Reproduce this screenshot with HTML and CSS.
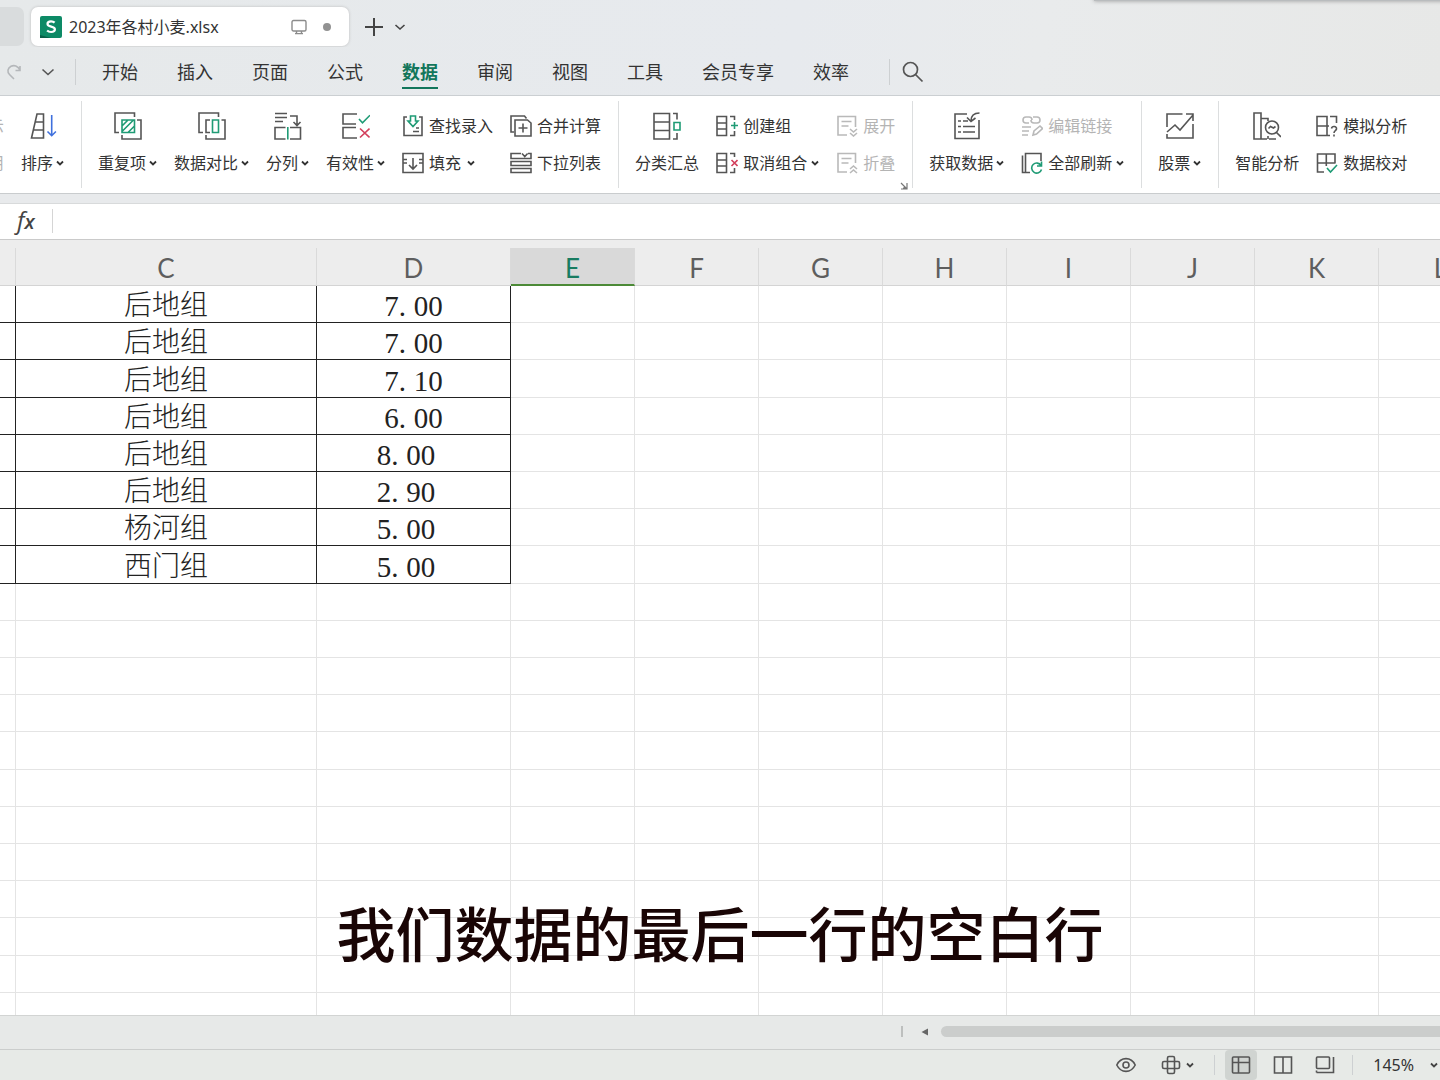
FILE: index.html
```html
<!DOCTYPE html>
<html lang="zh-CN">
<head>
<meta charset="utf-8">
<meta name="viewport" content="width=device-width, initial-scale=1">
<title>2023年各村小麦.xlsx</title>
<link rel="stylesheet" href="styles.css">
</head>
<body>
<svg class="defs" aria-hidden="true">
  <symbol id="caret" viewBox="0 0 8 8"><path d="M1 2.500 4 5.500 7 2.500" fill="none" stroke="currentColor" stroke-width="1.800"/></symbol>
</svg>
<div class="app">
  <header class="top">
    <div class="window-edge"></div>
    <div class="tabs">
      <div class="tab-rest"></div>
      <div class="tab">
        <svg class="logo" viewBox="0 0 22 22"><rect width="22" height="22" rx="2" fill="#0d8a66"/><path d="M0 22v-3l11 3z" fill="#076048"/><path d="M14.600 6.600C13.600 5.600 12.400 5.300 11 5.300c-2.200 0-3.500 1-3.500 2.600 0 3.600 7.400 1.800 7.400 5.400 0 1.700-1.500 2.700-3.800 2.700-1.600 0-3-.5-4-1.500" fill="none" stroke="#fff" stroke-width="2.200"/></svg>
        <span class="tab-name">2023年各村小麦.xlsx</span>
        <svg class="i16" viewBox="0 0 16 16" fill="none" stroke="#8c8c8c" stroke-width="1.400"><rect x="1" y="1.500" width="14" height="10.500" rx="1.500"/><path d="M5.500 12v2.500M10.500 12v2.500M4 14.600h8"/></svg>
        <span class="dot"></span>
      </div>
      <button class="plain new" aria-label="新建"><svg class="i20" viewBox="0 0 20 20" fill="none" stroke="#444" stroke-width="2"><path d="M10 1v18M1 10h18"/></svg></button>
      <button class="plain" aria-label="标签列表"><svg class="i12" viewBox="0 0 12 12" fill="none" stroke="#444" stroke-width="1.600"><path d="m1.500 4 4.500 4 4.500-4"/></svg></button>
    </div>
    <nav class="menu">
      <button class="plain redo" aria-label="恢复"><svg class="i16" viewBox="0 0 16 16" fill="none" stroke="#b4b7ba" stroke-width="1.600"><path d="M14 2v4.500H9.500M14 6.200C12 1.500 8 .8 5 2.300 1.500 4.200 1 8 3.500 10.500L8 15"/></svg></button>
      <button class="plain more" aria-label="更多"><svg class="i14" viewBox="0 0 14 14" fill="none" stroke="#555" stroke-width="1.600"><path d="m1.500 4.500 5.500 5 5.500-5"/></svg></button>
      <span class="bar"></span>
      <div class="links">
        <a href="#">开始</a><a href="#">插入</a><a href="#">页面</a><a href="#">公式</a><a href="#" class="on">数据</a><a href="#">审阅</a><a href="#">视图</a><a href="#">工具</a><a href="#">会员专享</a><a href="#">效率</a>
      </div>
      <span class="bar"></span>
      <button class="plain find" aria-label="搜索"><svg class="i22" viewBox="0 0 22 22" fill="none" stroke="#555" stroke-width="1.700"><circle cx="8.500" cy="8.500" r="7"/><path d="m13.500 13.500 7 7"/></svg></button>
    </nav>
  </header>

  <section class="ribbon" aria-label="数据">
    <div class="group first">
      <div class="pair clip"><span class="small off">全部显示</span><span class="small off">重新应用</span></div>
      <button class="big"><span class="pic"><svg class="i28" viewBox="0 0 28 28"><path d="M8 2h6.500v24H2.500zM6.500 10h8M4.500 18h10"/><path class="b" d="M22.700 3v20.500M18.500 19.500l4.200 4.200 4.200-4.200"/></svg></span><span class="lbl">排序<svg class="car"><use href="#caret"/></svg></span></button>
    </div>
    <div class="group">
      <button class="big"><span class="pic"><svg class="i28" viewBox="0 0 28 28"><path d="M5 20.500H1V1h19.500v4M23 8h4v19H8v-4"/><path class="g" d="M8 8h12.500v12.500H8zM8 14l6-6M8 19.500 19.500 8M14 20.500l6.500-6.500"/></svg></span><span class="lbl">重复项<svg class="car"><use href="#caret"/></svg></span></button>
      <button class="big"><span class="pic"><svg class="i28" viewBox="0 0 28 28"><path d="M5 20.500H1V1h19.500v4M23.500 8H27v19H8v-4M12 8H8v12.500h4"/><path class="g" d="M14.500 8h6v12.500h-6z"/></svg></span><span class="lbl">数据对比<svg class="car"><use href="#caret"/></svg></span></button>
      <button class="big"><span class="pic"><svg class="i28" viewBox="0 0 28 28"><path d="M1 1.500h12M1 5.500h12M1 9.500h8M16 4h7v9M19.500 10l3.500 3.500 3.500-3.500M11.500 15.500H1V27h10.500M16 15.500h10.500V27H16"/><path class="g" d="M13.800 15v12.500"/></svg></span><span class="lbl">分列<svg class="car"><use href="#caret"/></svg></span></button>
      <button class="big"><span class="pic"><svg class="i28" viewBox="0 0 28 28"><path d="M15 2H1v10h13M14 15.500H1V26h14"/><path class="g" d="m17 7 3.500 3.800L28 3.200"/><path class="r" d="m18 16.500 9.500 9M27.500 16.500l-9.500 9"/></svg></span><span class="lbl">有效性<svg class="car"><use href="#caret"/></svg></span></button>
      <div class="pair">
        <button class="small"><svg class="i22" viewBox="0 0 22 22"><path d="M5 2H2v18.500h18V2h-3M11 16.500h6M14 13h3"/><path class="g" d="M8.500 1h5v5H16l-5 5.500L6 6h2.500z"/></svg>查找录入</button>
        <button class="small"><svg class="i22" viewBox="0 0 22 22"><path d="M5 7.500H1v-6h20v6h-4M5 11H1v9.500h20V11h-4M1 7.500V11M21 7.500V11M11 6v11M7 13l4 4 4-4"/></svg>填充<svg class="car far"><use href="#caret"/></svg></button>
      </div>
      <div class="pair">
        <button class="small"><svg class="i22" viewBox="0 0 22 22"><path d="M4 17H1V1h13.500l2 2.500M5 5h12.500L21 8v13H5zM13 8.500v9M8.500 13h9"/></svg>合并计算</button>
        <button class="small"><svg class="i22" viewBox="0 0 22 22"><path d="M11 1.500H1v5h20v-5h-3M12 1.500l2.800 3 2.800-3M1 9.500h20v4H1zM1 16.500h20v4H1z"/></svg>下拉列表</button>
      </div>
    </div>
    <div class="group">
      <button class="big"><span class="pic"><svg class="i28" viewBox="0 0 28 28"><path d="M1 1.500h15.500V27H1zM1 10h15.500M1 18.500h15.500M20 1.500h4v6M24 21v6h-4"/><path class="g" d="M21 10.500h6V18h-6z"/></svg></span><span class="lbl">分类汇总</span></button>
      <div class="pair">
        <button class="small"><svg class="i22" viewBox="0 0 22 22"><path d="M1 1.500h9.500v19H1zM1 8h9.500M1 14h9.500M14 1.500h4.500V5M18.500 16v4.500H14"/><path class="g" d="M18.500 7v7M15 10.500h7"/></svg>创建组</button>
        <button class="small"><svg class="i22" viewBox="0 0 22 22"><path d="M1 1.500h9.500v19H1zM1 8h9.500M1 14h9.500M14 1.500h4.500V5M18.500 16v4.500H14"/><path class="r" d="m15.500 8 6 6M21.500 8l-6 6"/></svg>取消组合<svg class="car"><use href="#caret"/></svg></button>
      </div>
      <div class="pair">
        <button class="small off" disabled><svg class="i22" viewBox="0 0 22 22"><path d="M11 20H2V1.500h17.500V12M5.500 6.500h10M5.500 11h7M14 14l3.500 3 3.500-3M14 18l3.500 3 3.500-3"/></svg>展开</button>
        <button class="small off" disabled><svg class="i22" viewBox="0 0 22 22"><path d="M11 20H2V1.500h17.500V11M5.500 6.500h10M5.500 11h7M14 17l3.500-3 3.500 3M14 21l3.500-3 3.500 3"/></svg>折叠</button>
      </div>
      <button class="plain launcher" aria-label="分级显示设置"><svg class="i8" viewBox="0 0 8 8"><path d="M1 1l5 5M7 1v6H1M4.500 4v2.500M3 6h3.500"/></svg></button>
    </div>
    <div class="group">
      <button class="big"><span class="pic"><svg class="i28" viewBox="0 0 28 28"><path d="M14 2H2v24.500h24V8M5 9h3M10 9h5M5 14.500h3M10 14.500h12M5 20h3M10 20h12M26.500 1c-5 0-8.500 2-8.500 8M14 5.500l4 4 4.500-3.500"/></svg></span><span class="lbl">获取数据<svg class="car"><use href="#caret"/></svg></span></button>
      <div class="pair">
        <button class="small off" disabled><svg class="i22" viewBox="0 0 22 22"><path d="M8 8H5a3 3 0 0 1 0-6h3a3 3 0 0 1 3 3M12 2h4a3 3 0 0 1 0 6h-3a3 3 0 0 1-3-3M1 12h9M1 16h7M1 20h6M12 20l1-4 6-5 2.500 2.500-6 5.500z"/></svg>编辑链接</button>
        <button class="small"><svg class="i22" viewBox="0 0 22 22"><path d="M1.500 3.500v17h3M9 20.500H4.500v-19H20V9"/><path class="g" d="M20 13.500a5 5 0 1 0 .5 4M20.500 9.500v4.500H16"/></svg>全部刷新<svg class="car"><use href="#caret"/></svg></button>
      </div>
    </div>
    <div class="group">
      <button class="big"><span class="pic"><svg class="i28" viewBox="0 0 28 28"><path d="M16.500 2H1v13M27 12v14H1v-4M1 20l8-7 5 5L27 3M20 2h7v7"/></svg></span><span class="lbl">股票<svg class="car"><use href="#caret"/></svg></span></button>
    </div>
    <div class="group last">
      <button class="big"><span class="pic"><svg class="i28" viewBox="0 0 28 28"><path d="M1 1h7v26H1zM8 6.500h7V9M8 27h6M16 27h7M15 24v3"/><circle cx="19" cy="15.500" r="6.500"/><path d="m23.500 20.500 4.500 4.500M15.500 16.500l2-2 3 1.500 2-1.500"/></svg></span><span class="lbl">智能分析</span></button>
      <div class="pair">
        <button class="small"><svg class="i22" viewBox="0 0 22 22"><path d="M1 1.500h10v19H1zM1 11h12M14 1.500h6.500V8M11 20.500h3M15.500 13.500c.5-3 5.500-2.500 5 .5-.3 1.800-2.500 1.500-2.500 4M18 19.500v2"/></svg>模拟分析</button>
        <button class="small"><svg class="i22" viewBox="0 0 22 22"><path d="M8 20H1.500V2H19v9.500M1.500 11H19M10.300 2v12"/><path class="g" d="m11 16 3.500 4L21 13"/></svg>数据校对</button>
      </div>
    </div>
  </section>

  <div class="formula">
    <label for="fx"><span class="f">f</span><span class="x">x</span></label>
    <input id="fx" type="text">
  </div>

  <main class="sheet">
    <table>
      <colgroup><col class="cb"><col class="cc"><col class="cd"><col class="cn"><col class="cn"><col class="cn"><col class="cn"><col class="cn"><col class="cn"><col class="cn"><col class="cn"></colgroup>
      <thead><tr><th></th><th>C</th><th>D</th><th class="sel">E</th><th>F</th><th>G</th><th>H</th><th>I</th><th>J</th><th>K</th><th>L</th></tr></thead>
      <tbody>
        <tr class="rec"><td></td><td>后地组</td><td>7<i>.</i>00</td><td></td><td></td><td></td><td></td><td></td><td></td><td></td><td></td></tr>
        <tr class="rec"><td></td><td>后地组</td><td>7<i>.</i>00</td><td></td><td></td><td></td><td></td><td></td><td></td><td></td><td></td></tr>
        <tr class="rec"><td></td><td>后地组</td><td>7<i>.</i>10</td><td></td><td></td><td></td><td></td><td></td><td></td><td></td><td></td></tr>
        <tr class="rec"><td></td><td>后地组</td><td>6<i>.</i>00</td><td></td><td></td><td></td><td></td><td></td><td></td><td></td><td></td></tr>
        <tr class="rec"><td></td><td>后地组</td><td class="spaced">8<i>.</i>00</td><td></td><td></td><td></td><td></td><td></td><td></td><td></td><td></td></tr>
        <tr class="rec"><td></td><td>后地组</td><td class="spaced">2<i>.</i>90</td><td></td><td></td><td></td><td></td><td></td><td></td><td></td><td></td></tr>
        <tr class="rec"><td></td><td>杨河组</td><td class="spaced">5<i>.</i>00</td><td></td><td></td><td></td><td></td><td></td><td></td><td></td><td></td></tr>
        <tr class="rec"><td></td><td>西门组</td><td class="spaced">5<i>.</i>00</td><td></td><td></td><td></td><td></td><td></td><td></td><td></td><td></td></tr>
        <tr><td></td><td></td><td></td><td></td><td></td><td></td><td></td><td></td><td></td><td></td><td></td></tr>
        <tr><td></td><td></td><td></td><td></td><td></td><td></td><td></td><td></td><td></td><td></td><td></td></tr>
        <tr><td></td><td></td><td></td><td></td><td></td><td></td><td></td><td></td><td></td><td></td><td></td></tr>
        <tr><td></td><td></td><td></td><td></td><td></td><td></td><td></td><td></td><td></td><td></td><td></td></tr>
        <tr><td></td><td></td><td></td><td></td><td></td><td></td><td></td><td></td><td></td><td></td><td></td></tr>
        <tr><td></td><td></td><td></td><td></td><td></td><td></td><td></td><td></td><td></td><td></td><td></td></tr>
        <tr><td></td><td></td><td></td><td></td><td></td><td></td><td></td><td></td><td></td><td></td><td></td></tr>
        <tr><td></td><td></td><td></td><td></td><td></td><td></td><td></td><td></td><td></td><td></td><td></td></tr>
        <tr><td></td><td></td><td></td><td></td><td></td><td></td><td></td><td></td><td></td><td></td><td></td></tr>
        <tr><td></td><td></td><td></td><td></td><td></td><td></td><td></td><td></td><td></td><td></td><td></td></tr>
        <tr><td></td><td></td><td></td><td></td><td></td><td></td><td></td><td></td><td></td><td></td><td></td></tr>
        <tr><td></td><td></td><td></td><td></td><td></td><td></td><td></td><td></td><td></td><td></td><td></td></tr>
      </tbody>
    </table>
    <p class="caption">我们数据的最后一行的空白行</p>
  </main>

  <div class="scroll">
    <span class="grip"></span>
    <button class="plain" aria-label="向左滚动"><svg class="i8" viewBox="0 0 8 8"><path d="M7 .5v7L.5 4z" fill="#666"/></svg></button>
    <span class="thumb"></span>
  </div>

  <footer class="status">
    <button class="plain eye" aria-label="护眼模式"><svg class="i20" viewBox="0 0 20 20"><path d="M.8 10C5 1.500 15 1.500 19.200 10 15 18.500 5 18.500.8 10z"/><circle cx="10" cy="10" r="3"/></svg></button>
    <button class="plain cross" aria-label="阅读模式"><svg class="i20" viewBox="0 0 20 20"><rect x="6.500" y="1.500" width="7" height="17" rx="1.500"/><rect x="1.500" y="6.500" width="17" height="7" rx="1.500"/></svg><svg class="car"><use href="#caret"/></svg></button>
    <span class="bar"></span>
    <button class="plain view on" aria-label="普通视图"><svg class="i20" viewBox="0 0 20 20"><rect x="1.500" y="2" width="17" height="16" rx="1"/><path d="M1.500 7.500h17M7.500 2v16"/></svg></button>
    <button class="plain view" aria-label="分页预览"><svg class="i20" viewBox="0 0 20 20"><path d="M10 2H1.500v16h17V2H10v16"/></svg></button>
    <button class="plain view" aria-label="页面布局"><svg class="i20" viewBox="0 0 20 20"><rect x="1.500" y="2" width="13" height="11.500" rx="1"/><path d="M1.500 17.500h17V2M1.500 15.500v2"/></svg></button>
    <span class="bar"></span>
    <button class="plain zoom">145%<svg class="car"><use href="#caret"/></svg></button>
  </footer>
</div>
</body>
</html>
```
FILE: styles.css
```css
* { box-sizing: border-box; }
body {
  margin: 0;
  font: 16px/24px "Noto Sans", "Noto Sans CJK SC", sans-serif;
  color: #333;
}
.defs { display: none; }
.app {
  display: flex;
  flex-direction: column;
  height: 100vh;
  overflow: hidden;
  background: #e8eaec;
}
button { font: inherit; color: inherit; border: 0; padding: 0; background: none; white-space: nowrap; }
svg { display: block; flex: none; }
.plain { display: flex; align-items: center; }
.i8 { width: 8px; height: 8px; }
.i12 { width: 12px; height: 12px; }
.i14 { width: 14px; height: 14px; }
.i16 { width: 16px; height: 16px; }
.i20 { width: 20px; height: 20px; }
.i22 { width: 22px; height: 22px; }
.i28 { width: 28px; height: 28px; }
.car { width: 8px; height: 8px; margin-left: 3px; }
.bar { width: 1px; height: 26px; background: #cdd0d2; }

/* title tabs and menu */
.top {
  position: relative;
  flex: none;
  border-bottom: 1px solid #cbcfd2;
  background: linear-gradient(100deg, #e6e9ea 0%, #e7eaee 55%, #e9ebec 72%, #e7e8e7 100%);
}
.window-edge {
  position: absolute;
  top: -4px;
  left: 76%;
  right: -8px;
  height: 5px;
  background: #b9bcbe;
  box-shadow: 0 0 4px #999;
}
.tabs { display: flex; align-items: center; height: 47px; padding: 7px 0 1px; overflow: hidden; }
.tab-rest { width: 24px; height: 39px; background: #d9dcdd; border-radius: 0 7px 7px 0; }
.tab {
  display: flex;
  align-items: center;
  width: 318px;
  height: 39px;
  margin-left: 7px;
  padding: 0 18px 0 9px;
  background: #fff;
  border-radius: 7px;
  box-shadow: 0 0 3px #bbb;
}
.logo { width: 22px; height: 22px; }
.tab-name { flex: 1; margin-left: 7px; }
.dot { width: 8px; height: 8px; margin-left: 16px; border-radius: 50%; background: #929292; }
.new { margin: 0 10px 0 15px; }
.menu { display: flex; align-items: center; height: 48px; padding-top: 1px; }
.redo { margin-left: 6px; }
.more { margin: 0 20px 0 19px; }
.links { display: flex; gap: 39px; margin: 0 40px 0 26px; font-size: 18px; line-height: 28px; }
.links a { color: #333; text-decoration: none; padding: 3px 0 1px; border-bottom: 2px solid transparent; white-space: nowrap; }
.links .on { color: #12765b; font-weight: 700; border-color: #12765b; }
.find { margin-left: 12px; }

/* ribbon */
.ribbon {
  display: flex;
  flex: none;
  height: 98px;
  padding: 5px 0;
  background: #fff;
  border-bottom: 1px solid #c9ccce;
  overflow: hidden;
}
.group { position: relative; display: flex; flex: none; gap: 17px; padding: 6px 17px 0 16px; border-right: 1px solid #dcdedf; }
.group.first { padding-left: 0; }
.group.last { border: 0; }
.ribbon svg { fill: none; stroke: #555; stroke-width: 1.6; }
.ribbon .g { stroke: #1f9b75; }
.ribbon .b { stroke: #3f70dd; }
.ribbon .r { stroke: #d33f5c; }
.big { display: flex; flex-direction: column; align-items: center; }
.pic, .lbl { display: flex; align-items: center; height: 37px; }
.ribbon .car { color: #333; stroke: none; }
.pair { display: flex; flex-direction: column; }
.small { display: flex; align-items: center; gap: 5px; height: 37px; }
.small .car { margin-left: -1px; }
.small .car.far { margin-left: 1px; }
.small.off { color: #b4b4b4; }
.ribbon .off svg { stroke: #b9b9b9; }
.pair.clip { width: 4px; align-items: flex-end; overflow: hidden; white-space: nowrap; }
.launcher { position: absolute; right: 4px; bottom: -2px; }
.ribbon .launcher svg { stroke: #777; stroke-width: 1.2; }

/* formula bar */
.formula {
  display: flex;
  align-items: center;
  flex: none;
  height: 37px;
  margin-top: 9px;
  padding: 0 0 2px 17px;
  background: #fff;
  border-top: 1px solid #d8dadb;
  border-bottom: 1px solid #cacaca;
}
.formula label { width: 35px; font: italic 24px/24px "Open Sans", sans-serif; color: #444; }
.formula .x { font-size: 20px; font-weight: 600; }
.formula input { flex: 1; height: 24px; border: 0; border-left: 1px solid #d5d5d5; outline: 0; background: none; font: inherit; }

/* grid */
.sheet { position: relative; flex: 1; min-height: 0; overflow: hidden; background: linear-gradient(#ededed 46px, #fff 46px); }
table { width: 1503px; margin-top: 8px; table-layout: fixed; border-collapse: separate; border-spacing: 0; }
.cb { width: 16px; }
.cc { width: 301px; }
.cd { width: 194px; }
.cn { width: 124px; }
th {
  height: 38px;
  padding: 3px 0 0;
  font: 26px/30px Lato, sans-serif;
  color: #5e5e5e;
  border-right: 1px solid #dadada;
  border-bottom: 1px solid #d4d4d4;
}
th.sel { color: #187c61; background: #d9d9d9; border-bottom: 2px solid #4c8a37; }
td {
  height: 37px;
  padding: 4px 0 0;
  text-align: center;
  font: 300 28px/32px "Liberation Serif", "Noto Sans CJK SC", serif;
  color: #222;
  border-right: 1px solid #e4e4e4;
  border-bottom: 1px solid #e4e4e4;
}
tr:nth-child(5n+3) td { height: 38px; }
.rec td:nth-child(-n+3) { border-color: #222; }
td:nth-child(3) { font-size: 29px; }
td i { display: inline-block; width: 15px; text-align: left; font-style: normal; }
.spaced { padding-right: 15px; }
.caption {
  position: absolute;
  left: 0;
  right: 0;
  bottom: 41px;
  margin: 0;
  text-align: center;
  font: 500 59px/84px "Noto Sans CJK SC", sans-serif;
  color: #190505;
}

/* scroll bar and status bar */
.scroll {
  display: flex;
  align-items: center;
  flex: none;
  height: 34px;
  padding: 0 0 2px 901px;
  background: #e7e9e8;
  border-top: 1px solid #d2d4d3;
}
.grip { width: 2px; height: 11px; margin-right: 18px; background: #bdbfbe; }
.thumb { flex: 1; height: 11px; margin-left: 12px; border-radius: 6px 0 0 6px; background: #cbcdcc; }
.status {
  display: flex;
  align-items: center;
  justify-content: flex-end;
  flex: none;
  height: 31px;
  padding-right: 2px;
  background: #e7eae7;
  border-top: 1px solid #cbcdcc;
}
.status svg { fill: none; stroke: #555; stroke-width: 1.6; }
.status .bar { height: 20px; }
.status .car { stroke: none; margin-left: 5px; color: #444; }
.cross { margin: 0 20px 0 25px; }
.view { justify-content: center; width: 32px; height: 30px; margin-left: 10px; border-radius: 4px; }
.view.on { background: #d0d4d1; }
.view + .bar { margin: 0 20px 0 11px; }
.status .zoom .car { margin-left: 16px; }
```
